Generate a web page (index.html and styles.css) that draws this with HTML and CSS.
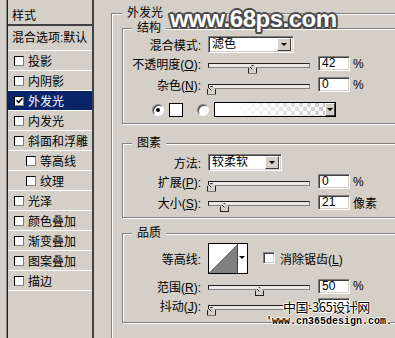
FILE: index.html
```html
<!DOCTYPE html>
<html lang="zh-CN">
<head>
    <meta charset="UTF-8">
    <meta name="viewport" content="width=device-width, initial-scale=1.0">
    <title>图层样式 - 外发光</title>
    <link rel="stylesheet" href="styles.css">
</head>
<body>
<div class="dialog">

    <aside class="style-list">
        <div class="list-head">样式</div>
        <div class="list-blend">混合选项:默认</div>
        <div class="item"><span class="check"></span>投影</div>
        <div class="item"><span class="check"></span>内阴影</div>
        <div class="item selected"><span class="check"><svg width="7" height="7" viewBox="0 0 7 7"><path d="M0.5 3.2 L2.6 5.3 L6.5 1.2" stroke="#000" stroke-width="1.6" fill="none"/></svg></span>外发光</div>
        <div class="item"><span class="check"></span>内发光</div>
        <div class="item"><span class="check"></span>斜面和浮雕</div>
        <div class="item sub"><span class="check"></span>等高线</div>
        <div class="item sub"><span class="check"></span>纹理</div>
        <div class="item"><span class="check"></span>光泽</div>
        <div class="item"><span class="check"></span>颜色叠加</div>
        <div class="item"><span class="check"></span>渐变叠加</div>
        <div class="item"><span class="check"></span>图案叠加</div>
        <div class="item"><span class="check"></span>描边</div>
    </aside>

    <main class="options">
        <fieldset class="group outer">
            <legend>外发光</legend>

            <!-- 结构 -->
            <fieldset class="group structure">
                <legend>结构</legend>
                <div class="row h18">
                    <span class="lbl">混合模式:</span>
                    <div class="select mode"><span>滤色</span><i class="drop"></i></div>
                </div>
                <div class="row h21">
                    <span class="lbl">不透明度(<u>O</u>):</span>
                    <div class="slider"><i class="track"></i><i class="thumb" style="left: 40px"></i></div>
                    <span class="num">42</span><span class="unit">%</span>
                </div>
                <div class="row h21">
                    <span class="lbl">杂色(<u>N</u>):</span>
                    <div class="slider"><i class="track"></i><i class="thumb" style="left: -1px"></i></div>
                    <span class="num">0</span><span class="unit">%</span>
                </div>
                <div class="row color-row">
                    <span class="radio on"></span>
                    <span class="swatch"></span>
                    <span class="radio"></span>
                    <div class="gradient"><span class="ramp"></span><i class="drop"></i></div>
                </div>
            </fieldset>

            <!-- 图素 -->
            <fieldset class="group elements">
                <legend>图素</legend>
                <div class="row h18 first">
                    <span class="lbl">方法:</span>
                    <div class="select method"><span>较柔软</span><i class="drop"></i></div>
                </div>
                <div class="row h21">
                    <span class="lbl">扩展(<u>P</u>):</span>
                    <div class="slider"><i class="track"></i><i class="thumb" style="left: -1px"></i></div>
                    <span class="num">0</span><span class="unit">%</span>
                </div>
                <div class="row h20">
                    <span class="lbl">大小(<u>S</u>):</span>
                    <div class="slider"><i class="track"></i><i class="thumb" style="left: 12px"></i></div>
                    <span class="num">21</span><span class="unit">像素</span>
                </div>
            </fieldset>

            <!-- 品质 -->
            <fieldset class="group quality">
                <legend>品质</legend>
                <div class="row h36">
                    <span class="lbl">等高线:</span>
                    <div class="contour"><span class="curve"></span><i class="drop"></i></div>
                    <span class="box"></span>
                    <span class="box-label">消除锯齿(<u>L</u>)</span>
                </div>
                <div class="row h20">
                    <span class="lbl">范围(<u>R</u>):</span>
                    <div class="slider"><i class="track"></i><i class="thumb" style="left: 47px"></i></div>
                    <span class="num">50</span><span class="unit">%</span>
                </div>
                <div class="row h19">
                    <span class="lbl">抖动(<u>J</u>):</span>
                    <div class="slider"><i class="track"></i><i class="thumb" style="left: -1px"></i></div>
                    <span class="num"></span><span class="unit">%</span>
                </div>
            </fieldset>
        </fieldset>
    </main>

    <div class="mark-top">www.68ps.com</div>
    <div class="mark-bottom">中国-365设计网</div>
    <div class="mark-url">'www.cn365design.com.</div>
</div>
</body>
</html>
```

FILE: styles.css
```css
* {
    box-sizing: border-box;
}
html, body {
    margin: 0;
}
body {
    width: 395px;
    height: 338px;
    overflow: hidden;
    background-color: #d4d0c8;
    font-family: "Liberation Sans", "Noto Sans CJK SC", sans-serif;
    font-size: 12px;
    color: #000;
}
.dialog {
    position: relative;
    display: flex;
    height: 338px;
    padding-left: 7px;
    overflow: hidden;
}

/* left style list */
.style-list {
    flex: none;
    width: 87px;
    height: 338px;
    border-left: 1px solid #202020;
    border-right: 2px solid #404040;
    box-shadow: -1px 0 0 #808080;
}
.list-head {
    height: 26px;
    padding: 9px 0 0 4px;
    line-height: 14px;
    border-bottom: 2px solid #404040;
}
.list-blend {
    height: 25px;
    padding-left: 4px;
    line-height: 24px;
    border-bottom: 1px solid #fff;
}
.item {
    display: flex;
    align-items: center;
    gap: 4px;
    height: 20px;
    padding-left: 6px;
    border-bottom: 1px solid #fff;
}
.item.sub {
    padding-left: 18px;
}
.item.selected {
    background-color: #0a246a;
    color: #fff;
}
.check {
    display: flex;
    align-items: center;
    justify-content: center;
    width: 10px;
    height: 10px;
    background: #fff;
    border: 1px solid;
    border-color: #000 #808080 #808080 #000;
}

/* right option panel */
.options {
    flex: none;
    width: 300px;
    margin-left: 17px;
}
.group {
    margin: 0;
    padding: 0;
    min-width: 0;
    border: 1px solid #808080;
    box-shadow: inset 1px 1px 0 #fff, 1px 1px 0 #fff;
}
.group > legend {
    height: 14px;
    padding: 0 5px;
    line-height: 14px;
    background-color: #d4d0c8;
}
.outer {
    height: 332px;
    margin-top: 6px;
    padding: 1px 0 0 10px;
    border-bottom: none;
}
.structure > legend,
.elements > legend,
.quality > legend {
    margin-left: 9px;
}
.structure {
    padding-bottom: 5px;
}
.elements {
    margin-top: 12px;
    padding-bottom: 5px;
}
.quality {
    margin-top: 8px;
    padding-bottom: 7px;
}

.row {
    display: flex;
    align-items: center;
}
.h18 { height: 18px; }
.h19 { height: 19px; }
.h20 { height: 20px; }
.h21 { height: 21px; }
.h36 { height: 36px; }
.row.first {
    margin-top: 3px;
}
.lbl {
    width: 78px;
    margin-right: 7px;
    text-align: right;
    white-space: nowrap;
}

/* sunken controls */
.select, .num, .gradient, .box {
    background: #fff;
    border: 1px solid;
    border-color: #808080 #fff #fff #808080;
    box-shadow: inset 1px 1px 0 #404040, inset -1px -1px 0 #d4d0c8;
}
.select {
    display: flex;
    align-items: center;
    height: 17px;
    padding: 2px 2px 2px 3px;
}
.select span {
    flex: 1;
    line-height: 13px;
}
.select.mode {
    width: 86px;
}
.select.method {
    width: 74px;
}
.drop {
    position: relative;
    display: block;
    width: 14px;
    height: 13px;
    background: #d4d0c8;
    border: 1px solid;
    border-color: #fff #404040 #404040 #fff;
}
.drop::after {
    content: "";
    position: absolute;
    left: 3px;
    top: 4px;
    border-left: 3px solid transparent;
    border-right: 3px solid transparent;
    border-top: 3px solid #000;
}

.slider {
    position: relative;
    flex: none;
    width: 102px;
    height: 14px;
}
.track {
    position: absolute;
    left: 0;
    right: 0;
    top: 6px;
    height: 5px;
    background: #ece9e2;
    border: 1px solid;
    border-color: #202020 #808080 #808080 #202020;
}
.thumb {
    position: absolute;
    top: 8px;
    width: 9px;
    height: 9px;
    background: #d4d0c8;
    border: 1px solid #202020;
    clip-path: polygon(50% 0, 100% 45%, 100% 100%, 0 100%, 0 45%);
}
.thumb::before {
    content: "";
    position: absolute;
    inset: 0;
    background: linear-gradient(to bottom right, transparent 48%, #000 49%, #000 56%, transparent 57%) right top / 50% 50% no-repeat,
                linear-gradient(to bottom left, transparent 48%, #000 49%, #000 56%, transparent 57%) left top / 50% 50% no-repeat;
}
.num {
    width: 32px;
    height: 15px;
    margin-left: 8px;
    padding-left: 3px;
    line-height: 13px;
}
.unit {
    margin-left: 3px;
}

.color-row {
    height: 17px;
    margin-top: 6px;
    padding-left: 29px;
}
.radio {
    position: relative;
    width: 12px;
    height: 12px;
    border-radius: 50%;
    background: #fff;
    border: 1px solid;
    border-color: #808080 #fff #fff #808080;
    box-shadow: inset 1px 1px 0 #404040;
}
.radio.on::after {
    content: "";
    position: absolute;
    left: 3px;
    top: 3px;
    width: 4px;
    height: 4px;
    border-radius: 50%;
    background: #000;
}
.swatch {
    width: 14px;
    height: 14px;
    margin: 0 14px 0 5px;
    background: #fff;
    border: 1px solid #000;
}
.gradient {
    display: flex;
    width: 122px;
    height: 15px;
    margin-left: 5px;
    padding: 0;
    border: 1px solid #000;
    box-shadow: none;
}
.gradient .ramp {
    flex: 1;
    background: linear-gradient(to right, #fff 15%, rgba(255, 255, 255, 0)),
                conic-gradient(#ccc 25%, #fff 0 50%, #ccc 0 75%, #fff 0) 0 0 / 8px 8px;
}
.gradient .drop {
    width: 10px;
    height: 13px;
    border-color: #fff #404040 #404040 #fff;
}
.gradient .drop::after {
    left: 1px;
}

.contour {
    display: flex;
    width: 40px;
    height: 31px;
    border: 1px solid #000;
}
.curve {
    flex: 1;
    background: linear-gradient(to bottom right, #fff 50%, #808080 50%);
    border-right: 1px solid #404040;
}
.contour .drop {
    width: 9px;
    height: 29px;
    background: #fff;
    border: none;
}
.contour .drop::after {
    left: 1px;
    top: 12px;
}
.box {
    width: 12px;
    height: 12px;
    margin-left: 15px;
}
.box-label {
    margin-left: 5px;
}

/* watermarks over the screenshot */
.mark-top {
    position: absolute;
    left: 170px;
    top: 7px;
    font-family: "Liberation Sans", sans-serif;
    font-weight: bold;
    font-size: 24px;
    line-height: 24px;
    letter-spacing: -0.5px;
    color: #fff;
    text-shadow: 2px 0 0 #4a4a4a, -2px 0 0 #4a4a4a, 0 2px 0 #4a4a4a, 0 -2px 0 #4a4a4a,
                 1.5px 1.5px 0 #4a4a4a, -1.5px 1.5px 0 #4a4a4a, 1.5px -1.5px 0 #4a4a4a, -1.5px -1.5px 0 #4a4a4a;
}
.mark-bottom {
    position: absolute;
    left: 283px;
    top: 300px;
    font-family: "Noto Sans CJK SC", sans-serif;
    font-size: 13px;
    line-height: 14px;
    letter-spacing: -0.5px;
    color: #000;
    text-shadow: 1px 0 0 #fff, -1px 0 0 #fff, 0 1px 0 #fff, 0 -1px 0 #fff;
}
.mark-url {
    position: absolute;
    left: 266px;
    top: 316px;
    font-family: "Liberation Mono", monospace;
    font-weight: bold;
    font-size: 10px;
    line-height: 12px;
    color: #000;
    text-shadow: 1px 0 0 #fff, -1px 0 0 #fff, 0 1px 0 #fff, 0 -1px 0 #fff;
}
```
